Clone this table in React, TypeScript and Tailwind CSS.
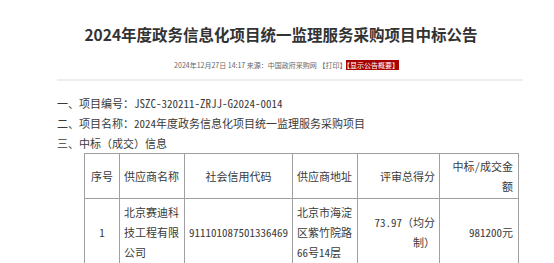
export default function App() {
  const cell = "border border-[#a0a0a0] px-[4px] align-middle"

  return (
    <div className="min-h-screen bg-white text-[#333] font-['Noto_Sans_CJK_SC',sans-serif]">
      <div className="ml-[57px] w-[466px] pt-[24px]">
        {/* Title */}
        <h1 className="pr-[18px] text-center text-[15.5px] font-bold leading-[20px] text-[#333]">
          2024年度政务信息化项目统一监理服务采购项目中标公告
        </h1>

        {/* Meta */}
        <div className="mt-[16px] pr-[7px] text-center text-[7px] leading-[10px] text-[#666]">
          2024年12月27日 14:17 来源：中国政府采购网 【打印】
          <span className="bg-[#a80000] text-white">【显示公告概要】</span>
        </div>

        <div className="mt-[9px] h-[2px] bg-[#eeeeee]" />

        {/* Body */}
        <div className="mt-[12px] text-[11px] leading-[20px] text-[#3a3a3a] font-['Noto_Sans_Mono_CJK_SC','Noto_Sans_CJK_SC',sans-serif]">
          <p>一、项目编号：JSZC-320211-ZRJJ-G2024-0014</p>
          <p>二、项目名称：2024年度政务信息化项目统一监理服务采购项目</p>
          <p>三、中标（成交）信息</p>

          <table className="ml-[27px] w-[434px] table-fixed border-collapse">
            <colgroup>
              <col className="w-[35px]" />
              <col className="w-[65px]" />
              <col className="w-[108px]" />
              <col className="w-[65px]" />
              <col className="w-[82px]" />
              <col className="w-[79px]" />
            </colgroup>
            <tbody>
              <tr className="h-[44px]">
                <td className={`${cell} py-[2px] text-center`}>序号</td>
                <td className={`${cell} py-[2px] text-left`}>供应商名称</td>
                <td className={`${cell} py-[2px] text-center`}>社会信用代码</td>
                <td className={`${cell} py-[2px] text-left`}>供应商地址</td>
                <td className={`${cell} py-[2px] text-right`}>评审总得分</td>
                <td className={`${cell} py-[2px] pr-[5px] text-right`}>中标/成交金额</td>
              </tr>
              <tr>
                <td className={`${cell} py-[3px] text-center`}>1</td>
                <td className={`${cell} py-[3px] text-left`}>北京赛迪科技工程有限公司</td>
                <td className={`${cell} py-[3px] px-[2px] text-center whitespace-nowrap`}>911101087501336469</td>
                <td className={`${cell} py-[3px] text-left`}>北京市海淀区紫竹院路66号14层</td>
                <td className={`${cell} py-[3px] text-right`}>73.97（均分制）</td>
                <td className={`${cell} py-[3px] pr-[5px] text-right`}>981200元</td>
              </tr>
            </tbody>
          </table>
        </div>
      </div>
    </div>
  )
}
